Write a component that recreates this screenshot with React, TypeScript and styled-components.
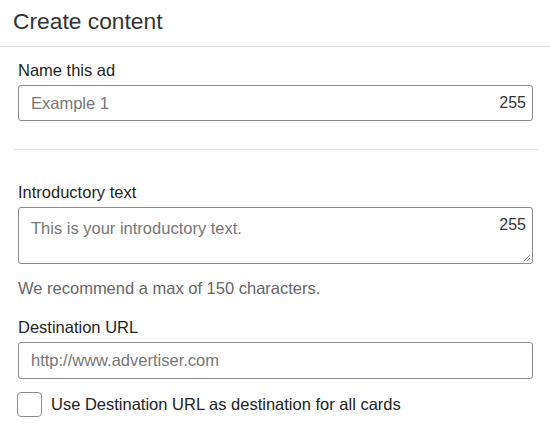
import styled, {createGlobalStyle} from "styled-components";

const GlobalStyle = createGlobalStyle`
    body {
        margin: 0;
        background: #fff;
        font-family: "Liberation Sans", Arial, sans-serif;
        color: #222;
    }
`;

const Page = styled.div`
    width: 550px;
`;

const Header = styled.header`
    height: 47px;
    box-sizing: border-box;
    padding: 8px 13px 0;
    border-bottom: 1px solid #dcdcdc;
    font-size: 22.8px;
    color: #333;
`;

const Section = styled.section`
    padding: 0 17px 0 18px;
`;

const Label = styled.div<{$top: number}>`
    margin-top: ${(p) => p.$top}px;
    font-size: 16.5px;
    line-height: 20px;
    color: #1f1f1f;
`;

const Field = styled.div<{$height: number}>`
    position: relative;
    margin-top: 5px;
    height: ${(p) => p.$height}px;
    box-sizing: border-box;
    border: 1px solid #8c8c8c;
    border-radius: 3px;
    display: flex;
    align-items: ${(p) => (p.$height > 40 ? "flex-start" : "center")};
    padding: ${(p) => (p.$height > 40 ? "11px" : "0")} 6px 0 12px;
    font-size: 16.5px;
`;

const Placeholder = styled.span`
    flex: 1;
    color: #767676;
`;

const Counter = styled.span<{$raise?: boolean}>`
    color: #333;
    font-size: 16px;
    margin-top: ${(p) => (p.$raise ? "-3px" : "0")};
`;

const Grip = styled.svg`
    position: absolute;
    right: 1px;
    bottom: 1px;
`;

const Divider = styled.hr`
    margin: 28px 12px 0 13px;
    border: 0;
    border-top: 1px solid #e2e2e2;
`;

const Hint = styled.div`
    margin-top: 14px;
    font-size: 16.5px;
    line-height: 20px;
    color: #666;
`;

const CheckRow = styled.label`
    margin-top: 13px;
    display: flex;
    align-items: center;
    gap: 9px;
    font-size: 16.5px;
    color: #222;
`;

const Box = styled.span`
    flex: none;
    width: 25px;
    height: 25px;
    box-sizing: border-box;
    border: 1px solid #8c8c8c;
    border-radius: 4px;
    margin-left: -1px;
`;

const App = () => {
    return (
        <Page>
            <GlobalStyle />
            <Header>Create content</Header>
            <Section>
                <Label $top={13}>Name this ad</Label>
                <Field $height={36}>
                    <Placeholder>Example 1</Placeholder>
                    <Counter>255</Counter>
                </Field>
            </Section>
            <Divider />
            <Section>
                <Label $top={32}>Introductory text</Label>
                <Field $height={57}>
                    <Placeholder>This is your introductory text.</Placeholder>
                    <Counter $raise>255</Counter>
                    <Grip width="9" height="9" viewBox="0 0 9 9">
                        <path d="M8 2L2 8M8 5L5 8" stroke="#999" strokeWidth="1" />
                    </Grip>
                </Field>
                <Hint>We recommend a max of 150 characters.</Hint>
                <Label $top={19}>Destination URL</Label>
                <Field $height={37}>
                    <Placeholder>http://www.advertiser.com</Placeholder>
                </Field>
                <CheckRow>
                    <Box />
                    Use Destination URL as destination for all cards
                </CheckRow>
            </Section>
        </Page>
    );
};

export default App;
